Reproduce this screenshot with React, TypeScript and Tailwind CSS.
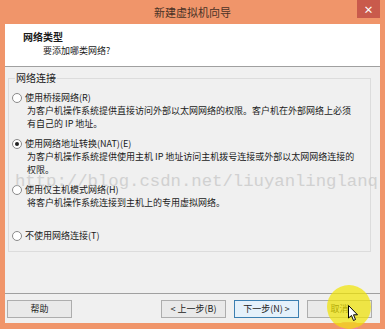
import React from "react";

const cjk = "font-['Microsoft_YaHei','Noto_Sans_CJK_SC',sans-serif]";

function Radio({ checked }: { checked?: boolean }) {
    return (
        <span className="flex h-[10px] w-[10px] flex-shrink-0 items-center justify-center rounded-full border border-[#8a8a8a] bg-white">
            {checked ? <span className="h-[4px] w-[4px] rounded-full bg-[#222]" /> : null}
        </span>
    );
}

type OptionProps = { label: string; lines?: string[]; checked?: boolean; className?: string };

function Option({ label, lines, checked, className }: OptionProps) {
    return (
        <div className={className}>
            <div className="flex h-[13px] items-center gap-[3px]">
                <Radio checked={checked} />
                <span>{label}</span>
            </div>
            {lines?.map((l) => (
                <div key={l} className="h-[13px] pl-[15px]">
                    {l}
                </div>
            ))}
        </div>
    );
}

function Btn({ children, primary }: { children: React.ReactNode; primary?: boolean }) {
    return (
        <button
            className={
                "flex h-[18px] w-[65px] items-center justify-center border text-[9px] text-[#222] " +
                (primary ? "border-[#3c7fb1] bg-[#e5f1fb]" : "border-[#adadad] bg-[#e9e9e9]")
            }
        >
            {children}
        </button>
    );
}

export default function App() {
    return (
        <div className={"relative flex h-[329px] w-[385px] flex-col overflow-hidden bg-[#f0956a] text-[#1a1a1a] " + cjk}>
            {/* title bar */}
            <div className="relative flex h-[24px] items-center justify-center text-[11px] text-[#4a3226]">
                新建虚拟机向导
                <div className="absolute right-[5px] top-0 flex h-[18px] w-[23px] items-center justify-center bg-[#c95a4c] text-[10px] font-bold text-white">
                    ×
                </div>
            </div>

            <div className="mx-[5px] flex flex-1 flex-col">
                {/* header */}
                <div className="h-[43px] border-b border-[#a0a0a0] bg-white pl-[18px] pt-[6px]">
                    <div className="text-[10px] font-bold leading-[14px]">网络类型</div>
                    <div className="pl-[20px] text-[9px] leading-[14px]">要添加哪类网络?</div>
                </div>

                {/* body */}
                <div className="flex-1 bg-[#f0f0f0] px-[3px] pt-[5px] text-[9px] leading-[13px]">
                    <fieldset className="mr-[6px] h-[180px] border border-[#dcdcdc] pl-[3px]">
                        <legend className="ml-[3px] px-[1px] text-[10px] leading-[12px]">网络连接</legend>
                        <Option
                            className="mt-[7px]"
                            label="使用桥接网络(R)"
                            lines={["为客户机操作系统提供直接访问外部以太网网络的权限。客户机在外部网络上必须", "有自己的 IP 地址。"]}
                        />
                        <Option
                            className="mt-[7px]"
                            checked
                            label="使用网络地址转换(NAT)(E)"
                            lines={["为客户机操作系统提供使用主机 IP 地址访问主机拨号连接或外部以太网网络连接的", "权限。"]}
                        />
                        <Option className="mt-[7px]" label="使用仅主机模式网络(H)" lines={["将客户机操作系统连接到主机上的专用虚拟网络。"]} />
                        <Option className="mt-[20px]" label="不使用网络连接(T)" />
                    </fieldset>
                </div>

                {/* footer */}
                <div className="flex h-[30px] items-start border-t border-[#a0a0a0] bg-[#f0f0f0] pl-[2px] pr-[8px] pt-[6px]">
                    <Btn>帮助</Btn>
                    <div className="ml-auto flex gap-[8px]">
                        <Btn>&lt; 上一步(B)</Btn>
                        <Btn primary>下一步(N) &gt;</Btn>
                        <Btn>取消</Btn>
                    </div>
                </div>
            </div>
            <div className="h-[6px]" />

            {/* watermark */}
            <div className="pointer-events-none absolute left-[15px] top-[172px] font-['Liberation_Mono',monospace] text-[17.3px] leading-[20px] text-[#c4c4c4] opacity-70">
                http://blog.csdn.net/liuyanlinglanq
            </div>

            {/* click highlight + cursor */}
            <div className="pointer-events-none absolute left-[340px] top-[322px] h-[8px] w-[18px] rounded-full bg-[#f07ab0]/80" />
            <div className="pointer-events-none absolute left-[327px] top-[285px] h-[44px] w-[44px] rounded-full bg-[#f1e400]/70" />
            <svg className="pointer-events-none absolute left-[348px] top-[305px]" width="11" height="17" viewBox="0 0 11 17">
                <path d="M0.5 0.5 L0.5 13 L3.5 10.5 L5.5 15.5 L7.5 14.5 L5.5 9.8 L9.5 9.8 Z" fill="white" stroke="black" strokeWidth="1" />
            </svg>
        </div>
    );
}
